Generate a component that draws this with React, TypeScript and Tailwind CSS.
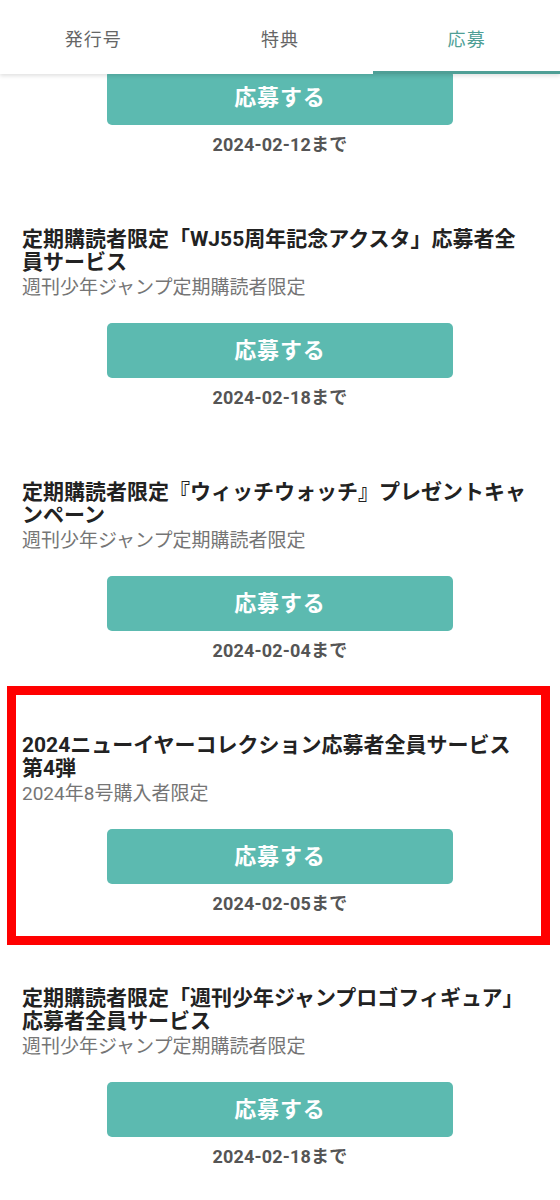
import React from "react";

type Item = { title: string; sub: string; date: string };

const items: Item[] = [
  {
    title: "定期購読者限定「WJ55周年記念アクスタ」応募者全員サービス",
    sub: "週刊少年ジャンプ定期購読者限定",
    date: "2024-02-18まで",
  },
  {
    title: "定期購読者限定『ウィッチウォッチ』プレゼントキャンペーン",
    sub: "週刊少年ジャンプ定期購読者限定",
    date: "2024-02-04まで",
  },
  {
    title: "2024ニューイヤーコレクション応募者全員サービス第4弾",
    sub: "2024年8号購入者限定",
    date: "2024-02-05まで",
  },
  {
    title: "定期購読者限定「週刊少年ジャンプロゴフィギュア」応募者全員サービス",
    sub: "週刊少年ジャンプ定期購読者限定",
    date: "2024-02-18まで",
  },
];

function ApplyButton() {
  return (
    <div className="flex justify-center">
      <button className="w-[346px] h-[55px] rounded-[5px] bg-[#5cbab0] text-white text-[22px] font-bold tracking-[0.04em] flex items-center justify-center">
        応募する
      </button>
    </div>
  );
}

function DateLine({ date }: { date: string }) {
  return (
    <div className="mt-[8px] text-center text-[18px] leading-[24px] font-bold tracking-[0.01em] text-[#555555]">
      {date}
    </div>
  );
}

function Entry({ item, highlighted }: { item: Item; highlighted?: boolean }) {
  return (
    <div className="relative pt-[44px] pb-[27px]">
      {highlighted && (
        <div className="pointer-events-none absolute left-[7px] right-[10px] top-[-4px] bottom-[-2px] border-[9px] border-[#ff0000]" />
      )}
      <div className="pl-[22px] pr-[30px]">
        <div className="text-[21px] leading-[23px] font-bold text-[#222222]">{item.title}</div>
        <div className="text-[19px] leading-[28px] text-[#757575]">{item.sub}</div>
      </div>
      <div className="mt-[21px]">
        <ApplyButton />
      </div>
      <DateLine date={item.date} />
    </div>
  );
}

export default function App() {
  const tabs = ["発行号", "特典", "応募"];
  return (
    <div
      className="w-[560px] h-[1200px] overflow-hidden bg-white"
      style={{ fontFamily: "Roboto, 'Noto Sans CJK JP', sans-serif" }}
    >
      <div className="relative z-10 h-[74px] bg-white grid grid-cols-3 shadow-[0_2px_4px_rgba(0,0,0,0.12)]">
        {tabs.map((t, i) => (
          <div key={t} className="relative flex items-center justify-center pt-[4px]">
            <span
              className={
                i === 2
                  ? "text-[18px] tracking-[0.06em] text-[#4f9f96]"
                  : "text-[18px] tracking-[0.06em] text-[#666666]"
              }
            >
              {t}
            </span>
            {i === 2 && <div className="absolute left-0 right-0 bottom-0 h-[3px] bg-[#4f9f96]" />}
          </div>
        ))}
      </div>
      <div className="mt-[-4px]">
        <div className="pb-[27px]">
          <ApplyButton />
          <DateLine date="2024-02-12まで" />
        </div>
        {items.map((it, i) => (
          <Entry key={i} item={it} highlighted={i === 2} />
        ))}
      </div>
    </div>
  );
}
